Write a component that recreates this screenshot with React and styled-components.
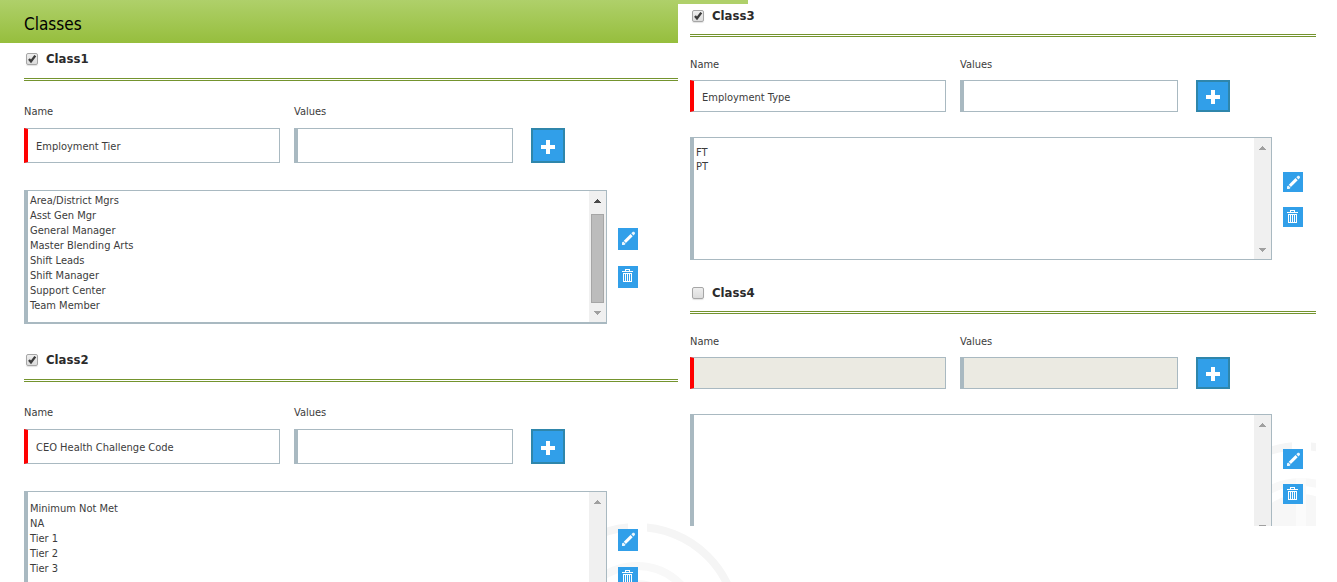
import React, { useState } from 'react';
import styled, { createGlobalStyle } from 'styled-components';

const GlobalStyle = createGlobalStyle`
  * {
    box-sizing: border-box;
  }

  body {
    margin: 0;
    background: #fff;
    color: #3c3c3c;
    font-family: 'DejaVu Sans Condensed', Tahoma, sans-serif;
    font-size: 11px;
    overflow: hidden;
  }
`;

const Page = styled.main`
  position: relative;
  display: grid;
  grid-template-columns: 678fr 659fr;
  align-items: start;
  height: 100vh;
  overflow: hidden;
`;

const Column = styled.div`
  position: relative;
  overflow: hidden;
`;

const Header = styled.header`
  height: 43px;
  padding: 0 24px;
  display: flex;
  align-items: center;
  background: linear-gradient(#afd06a, #96be3d);
`;

const HeaderTail = styled.div`
  width: 70px;
  height: 4px;
  background: #afd06a;
`;

const PageTitle = styled.h1`
  margin: 0;
  padding-top: 4px;
  color: #000;
  font-size: 17px;
  font-weight: 400;
  line-height: 24px;
`;

const Section = styled.section`
  position: relative;
  padding-left: ${({ $compact }) => ($compact ? '12px' : '24px')};
  margin-bottom: ${({ $compact }) => ($compact ? '21px' : '20px')};
`;

const SectionHead = styled.div`
  height: ${({ $compact }) => ($compact ? '33px' : '38px')};
  margin-right: ${({ $compact }) => ($compact ? '21px' : '0')};
  padding: ${({ $compact }) => ($compact ? '2px' : '6px')} 2px 0;
  border-bottom: 3px double #74942e;
`;

const SectionLabel = styled.label`
  display: flex;
  align-items: center;
  gap: 8px;
  color: #2b2b2b;
  font-size: 13px;
  font-weight: 700;
  line-height: 20px;
`;

const TickBox = styled.span`
  position: relative;
  display: flex;

  svg {
    position: absolute;
    inset: 0;
    pointer-events: none;
  }
`;

const Tick = styled.input`
  appearance: none;
  width: 12px;
  height: 12px;
  margin: 0;
  border: 1px solid #a6a6a6;
  border-radius: 2px;
  background: linear-gradient(#eee, #dcdcdc);
  box-shadow: 0 1px 1px #e2e2e2;
`;

const SectionBody = styled.div`
  padding-right: ${({ $compact }) => ($compact ? '34px' : '40px')};
`;

const FieldRow = styled.div`
  display: flex;
  align-items: flex-end;
  padding-right: 73px;
  padding-top: ${({ $compact }) => ($compact ? '19px' : '22px')};
  margin-bottom: ${({ $compact }) => ($compact ? '25px' : '27px')};
`;

const Field = styled.label`
  flex: ${({ $grow }) => $grow} 1 0;
  min-width: 0;
  margin-right: ${({ $last }) => ($last ? '18px' : '14px')};
  display: flex;
  flex-direction: column;
  gap: ${({ $compact }) => ($compact ? '6px' : '7px')};
  line-height: 18px;
`;

const TextBox = styled.input`
  width: 100%;
  height: ${({ $compact }) => ($compact ? '32px' : '35px')};
  padding: 2px 8px 0;
  border: 1px solid #a9b9c1;
  border-left: 4px solid ${({ required }) => (required ? '#f00' : '#a9b9c1')};
  border-radius: 0;
  background: #fff;
  color: #3c3c3c;
  font: inherit;
  outline: none;

  &:disabled {
    background: #ebeae2;
  }
`;

const AddButton = styled.button`
  flex: none;
  display: flex;
  align-items: center;
  justify-content: center;
  width: 34px;
  height: ${({ $compact }) => ($compact ? '32px' : '35px')};
  padding: 2px 0 0;
  border: 2px solid #2f86ab;
  background: #319fe9;
  cursor: pointer;
`;

const ListRow = styled.div`
  display: flex;
  align-items: center;
  gap: 11px;
`;

const ListFrame = styled.div`
  flex: 1;
  display: flex;
  height: ${({ $compact }) => ($compact ? '123px' : '134px')};
  border: solid #a9b9c1;
  border-width: 1px 1px ${({ $compact }) => ($compact ? '1px' : '2px')} 4px;
  background: #fff;
`;

const ListBox = styled.select`
  flex: 1;
  min-width: 0;
  padding: ${({ $scrolled, $compact }) => ($scrolled ? '3px' : $compact ? '8px' : '10px')} 0 0;
  border: 0;
  background: #fff;
  color: #3c3c3c;
  font: inherit;
  outline: none;
  overflow: hidden;
  scrollbar-width: none;

  option {
    height: ${({ $compact }) => ($compact ? '14px' : '15px')};
    min-height: 0;
    padding: 0 2px;
    line-height: 14px;
  }
`;

const ScrollBar = styled.div`
  flex: none;
  display: flex;
  flex-direction: column;
  align-items: center;
  width: 17px;
  background: #f0f0f0;
`;

const ScrollArrow = styled.button`
  flex: none;
  display: flex;
  align-items: center;
  justify-content: center;
  width: 17px;
  height: 19px;
  padding: 0;
  border: 0;
  background: none;
`;

const ScrollTrack = styled.div`
  flex: 1;
  display: flex;
  padding: 4px 0 0;
`;

const ScrollThumb = styled.div`
  width: 13px;
  border: 1px solid #a6a6a6;
  background: #bcbcbc;
`;

const Actions = styled.div`
  display: flex;
  flex-direction: column;
  gap: ${({ $compact }) => ($compact ? '15px' : '16px')};
  padding-top: 2px;
`;

const ActionButton = styled.button`
  display: flex;
  justify-content: center;
  width: 20px;
  height: ${({ $compact }) => ($compact ? '20px' : '22px')};
  padding: 3px 0 0;
  border: 0;
  background: #319fe9;
  cursor: pointer;
`;

const Watermark = styled.svg`
  position: absolute;
  right: ${({ $right }) => $right};
  bottom: ${({ $bottom }) => $bottom};
`;

const PlusIcon = () => (
  <svg width="14" height="14" viewBox="0 0 14 14" fill="#fff">
    <path d="M5 0h4v5h5v4H9v5H5V9H0V5h5z" />
  </svg>
);

const PencilIcon = () => (
  <svg width="14" height="14" viewBox="0 0 14 14" fill="#fff">
    <path d="M1 14V11.6l1.3-1.2 2.3 2.3L3.4 14z" opacity="0.9" />
    <path d="M2.8 9.8 9.6 3.1 11.7 5.2 4.9 12z" />
    <path d="M10.3 2.3 11.6 1C12.6 0 14.8 1.6 13.8 3L12.5 4.5z" opacity="0.9" />
  </svg>
);

const TrashIcon = () => (
  <svg width="14" height="14" viewBox="0 0 14 14" fill="#fff" shapeRendering="crispEdges">
    <path d="M4 0h5v2h3v1H1V2h3zM5 1v1h3V1z" fillRule="evenodd" />
    <path d="M2 4h9v9H2zM3 5v7h1V5zM5 5v7h1V5zM7 5v7h1V5zM9 5v7h1V5z" fillRule="evenodd" />
  </svg>
);

const ArrowIcon = ({ down, active }) => (
  <svg width="7" height="4" viewBox="0 0 7 4" fill={active ? '#4a4a4a' : '#a0a0a0'} shapeRendering="crispEdges">
    <path d={down ? 'M0 0h7v1H6v1H5v1H4v1H3V3H2V2H1V1H0z' : 'M3 0h1v1h1v1h1v1h1v1H0V3h1V2h1V1h1z'} />
  </svg>
);

// concentric rings behind the lower right corner of a column
const Rings = ({ width, height, cx, cy, solid, ...rest }) => (
  <Watermark width={width} height={height} viewBox={`0 0 ${width} ${height}`} fill="none" aria-hidden="true" {...rest}>
    <circle cx={cx} cy={cy} r="100" stroke="#f5f5f5" strokeWidth="8" />
    <rect x={cx - 9} y="0" width="19" height="12" fill="#fff" />
    <circle cx={cx} cy={cy} r={solid ? 64 : 61} stroke="#f8f8f8" strokeWidth="8" />
    <circle cx={cx} cy={cy} r={solid ? 52 : 47} fill="#f7f7f7" />
    {solid && <rect x={cx - 5} y="36" width="10" height="60" fill="#fbfbfb" />}
  </Watermark>
);

function Scroller({ scrollable }) {
  return (
    <ScrollBar>
      <ScrollArrow type="button" aria-label="Scroll up">
        <ArrowIcon active={scrollable} />
      </ScrollArrow>
      <ScrollTrack>{scrollable && <ScrollThumb />}</ScrollTrack>
      <ScrollArrow type="button" aria-label="Scroll down">
        <ArrowIcon down />
      </ScrollArrow>
    </ScrollBar>
  );
}

function ClassSection({ title, name = '', options = [], active = true, scrollable = false, compact = false }) {
  const [checked, setChecked] = useState(active);
  const [className, setClassName] = useState(name);
  const [value, setValue] = useState('');

  return (
    <Section $compact={compact}>
      <SectionHead $compact={compact}>
        <SectionLabel>
          <TickBox>
            <Tick type="checkbox" checked={checked} onChange={(e) => setChecked(e.target.checked)} />
            {checked && (
              <svg width="12" height="12" viewBox="0 0 12 12" fill="none">
                <path d="M3 6 5 8.4 9.3 2.6" stroke="#3d3d3d" strokeWidth="2.4" />
              </svg>
            )}
          </TickBox>
          {title}
        </SectionLabel>
      </SectionHead>
      <SectionBody $compact={compact}>
        <FieldRow $compact={compact}>
          <Field $grow={256} $compact={compact}>
            Name
            <TextBox
              type="text"
              required
              disabled={!checked}
              value={className}
              onChange={(e) => setClassName(e.target.value)}
              $compact={compact}
            />
          </Field>
          <Field $grow={compact ? 218 : 219} $last $compact={compact}>
            Values
            <TextBox
              type="text"
              disabled={!checked}
              value={value}
              onChange={(e) => setValue(e.target.value)}
              $compact={compact}
            />
          </Field>
          <AddButton type="button" aria-label="Add value" $compact={compact}>
            <PlusIcon />
          </AddButton>
        </FieldRow>
        <ListRow>
          <ListFrame $compact={compact}>
            <ListBox multiple aria-label={`${title} values`} $scrolled={scrollable} $compact={compact}>
              {options.map((option) => (
                <option key={option}>{option}</option>
              ))}
            </ListBox>
            <Scroller scrollable={scrollable} />
          </ListFrame>
          <Actions $compact={compact}>
            <ActionButton type="button" aria-label="Edit" $compact={compact}>
              <PencilIcon />
            </ActionButton>
            <ActionButton type="button" aria-label="Delete" $compact={compact}>
              <TrashIcon />
            </ActionButton>
          </Actions>
        </ListRow>
      </SectionBody>
    </Section>
  );
}

const RightColumn = styled(Column)`
  max-height: 526px;
`;

const tiers = [
  'Area/District Mgrs',
  'Asst Gen Mgr',
  'General Manager',
  'Master Blending Arts',
  'Shift Leads',
  'Shift Manager',
  'Support Center',
  'Team Member',
];

const healthCodes = ['Minimum Not Met', 'NA', 'Tier 1', 'Tier 2', 'Tier 3'];

function App() {
  return (
    <>
      <GlobalStyle />
      <Page>
        <Rings width={140} height={60} cx={46} cy={105} $right="calc(100% - 731px)" $bottom="0" />
        <Column>
          <Header>
            <PageTitle>Classes</PageTitle>
          </Header>
          <ClassSection title="Class1" name="Employment Tier" options={tiers} scrollable />
          <ClassSection title="Class2" name="CEO Health Challenge Code" options={healthCodes} />
        </Column>
        <RightColumn>
          <Rings width={45} height={84} cx={30} cy={104} solid $right="21px" $bottom="0" />
          <HeaderTail />
          <ClassSection title="Class3" name="Employment Type" options={['FT', 'PT']} compact />
          <ClassSection title="Class4" active={false} compact />
        </RightColumn>
      </Page>
    </>
  );
}

export default App;
